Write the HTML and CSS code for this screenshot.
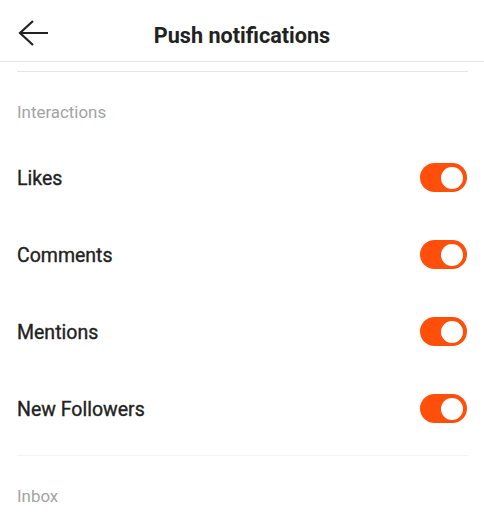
FILE: index.html
```html
<!DOCTYPE html>
<html>
  <head>
    <title>Push notifications</title>
    <link rel="stylesheet" href="styles.css">
  </head>
  <body>
    <div class="screen">
      <div class="header">
        <button class="back" aria-label="Back">
          <svg width="32" height="28" viewBox="0 0 32 28">
            <path d="M31 14H3M16 2L3 14l13 12" fill="none" stroke="#222" stroke-width="2.2"/>
          </svg>
        </button>
        <h1>Push notifications</h1>
      </div>
      <div class="content">
        <hr class="divider" />
        <div class="section-title">Interactions</div>
        <div class="rows">
          <div class="row">
            <span>Likes</span>
            <label class="toggle"><input type="checkbox" checked /><span></span></label>
          </div>
          <div class="row">
            <span>Comments</span>
            <label class="toggle"><input type="checkbox" checked /><span></span></label>
          </div>
          <div class="row">
            <span>Mentions</span>
            <label class="toggle"><input type="checkbox" checked /><span></span></label>
          </div>
          <div class="row">
            <span>New Followers</span>
            <label class="toggle"><input type="checkbox" checked /><span></span></label>
          </div>
        </div>
        <hr class="divider light" />
        <div class="section-title">Inbox</div>
      </div>
    </div>
  </body>
</html>
```

FILE: styles.css
```css
body {
  margin: 0;
  font-family: Roboto, "Liberation Sans", sans-serif;
  background-color: white;
  color: #222;
}
.screen {
  width: 484px;
  height: 518px;
  overflow: hidden;
}
.header {
  height: 61px;
  border-bottom: 1px solid #e4e4e4;
  display: flex;
  align-items: center;
  justify-content: center;
  position: relative;
}
.back {
  position: absolute;
  left: 17px;
  top: 19px;
  padding: 0;
  border: none;
  background: none;
  display: flex;
}
.header h1 {
  margin: 0;
  margin-top: 9px;
  font-size: 21.6px;
  font-weight: 700;
  color: #222;
}
.content {
  padding: 0 16px 0 17px;
}
.divider {
  margin: 9px 0 0;
  border: none;
  border-top: 1px solid #e4e4e4;
}
.divider.light {
  margin-top: 7px;
  border-top-color: #f3f3f3;
}
.section-title {
  height: 80px;
  display: flex;
  align-items: center;
  font-size: 16.9px;
  color: #a3a3a3;
}
.rows {
  margin-top: -12px;
}
.row {
  height: 77px;
  display: flex;
  align-items: center;
  justify-content: space-between;
  font-size: 19.5px;
  font-weight: 400;
  -webkit-text-stroke: 0.35px #222;
}
.toggle {
  position: relative;
  width: 47px;
  height: 29px;
  margin-right: 1px;
  margin-bottom: 2px;
}
.toggle input {
  display: none;
}
.toggle span {
  position: absolute;
  inset: 0;
  border-radius: 15px;
  background-color: #ff4f0a;
}
.toggle span::after {
  content: "";
  position: absolute;
  right: 4px;
  top: 3.5px;
  width: 22px;
  height: 22px;
  border-radius: 50%;
  background-color: white;
}
```
